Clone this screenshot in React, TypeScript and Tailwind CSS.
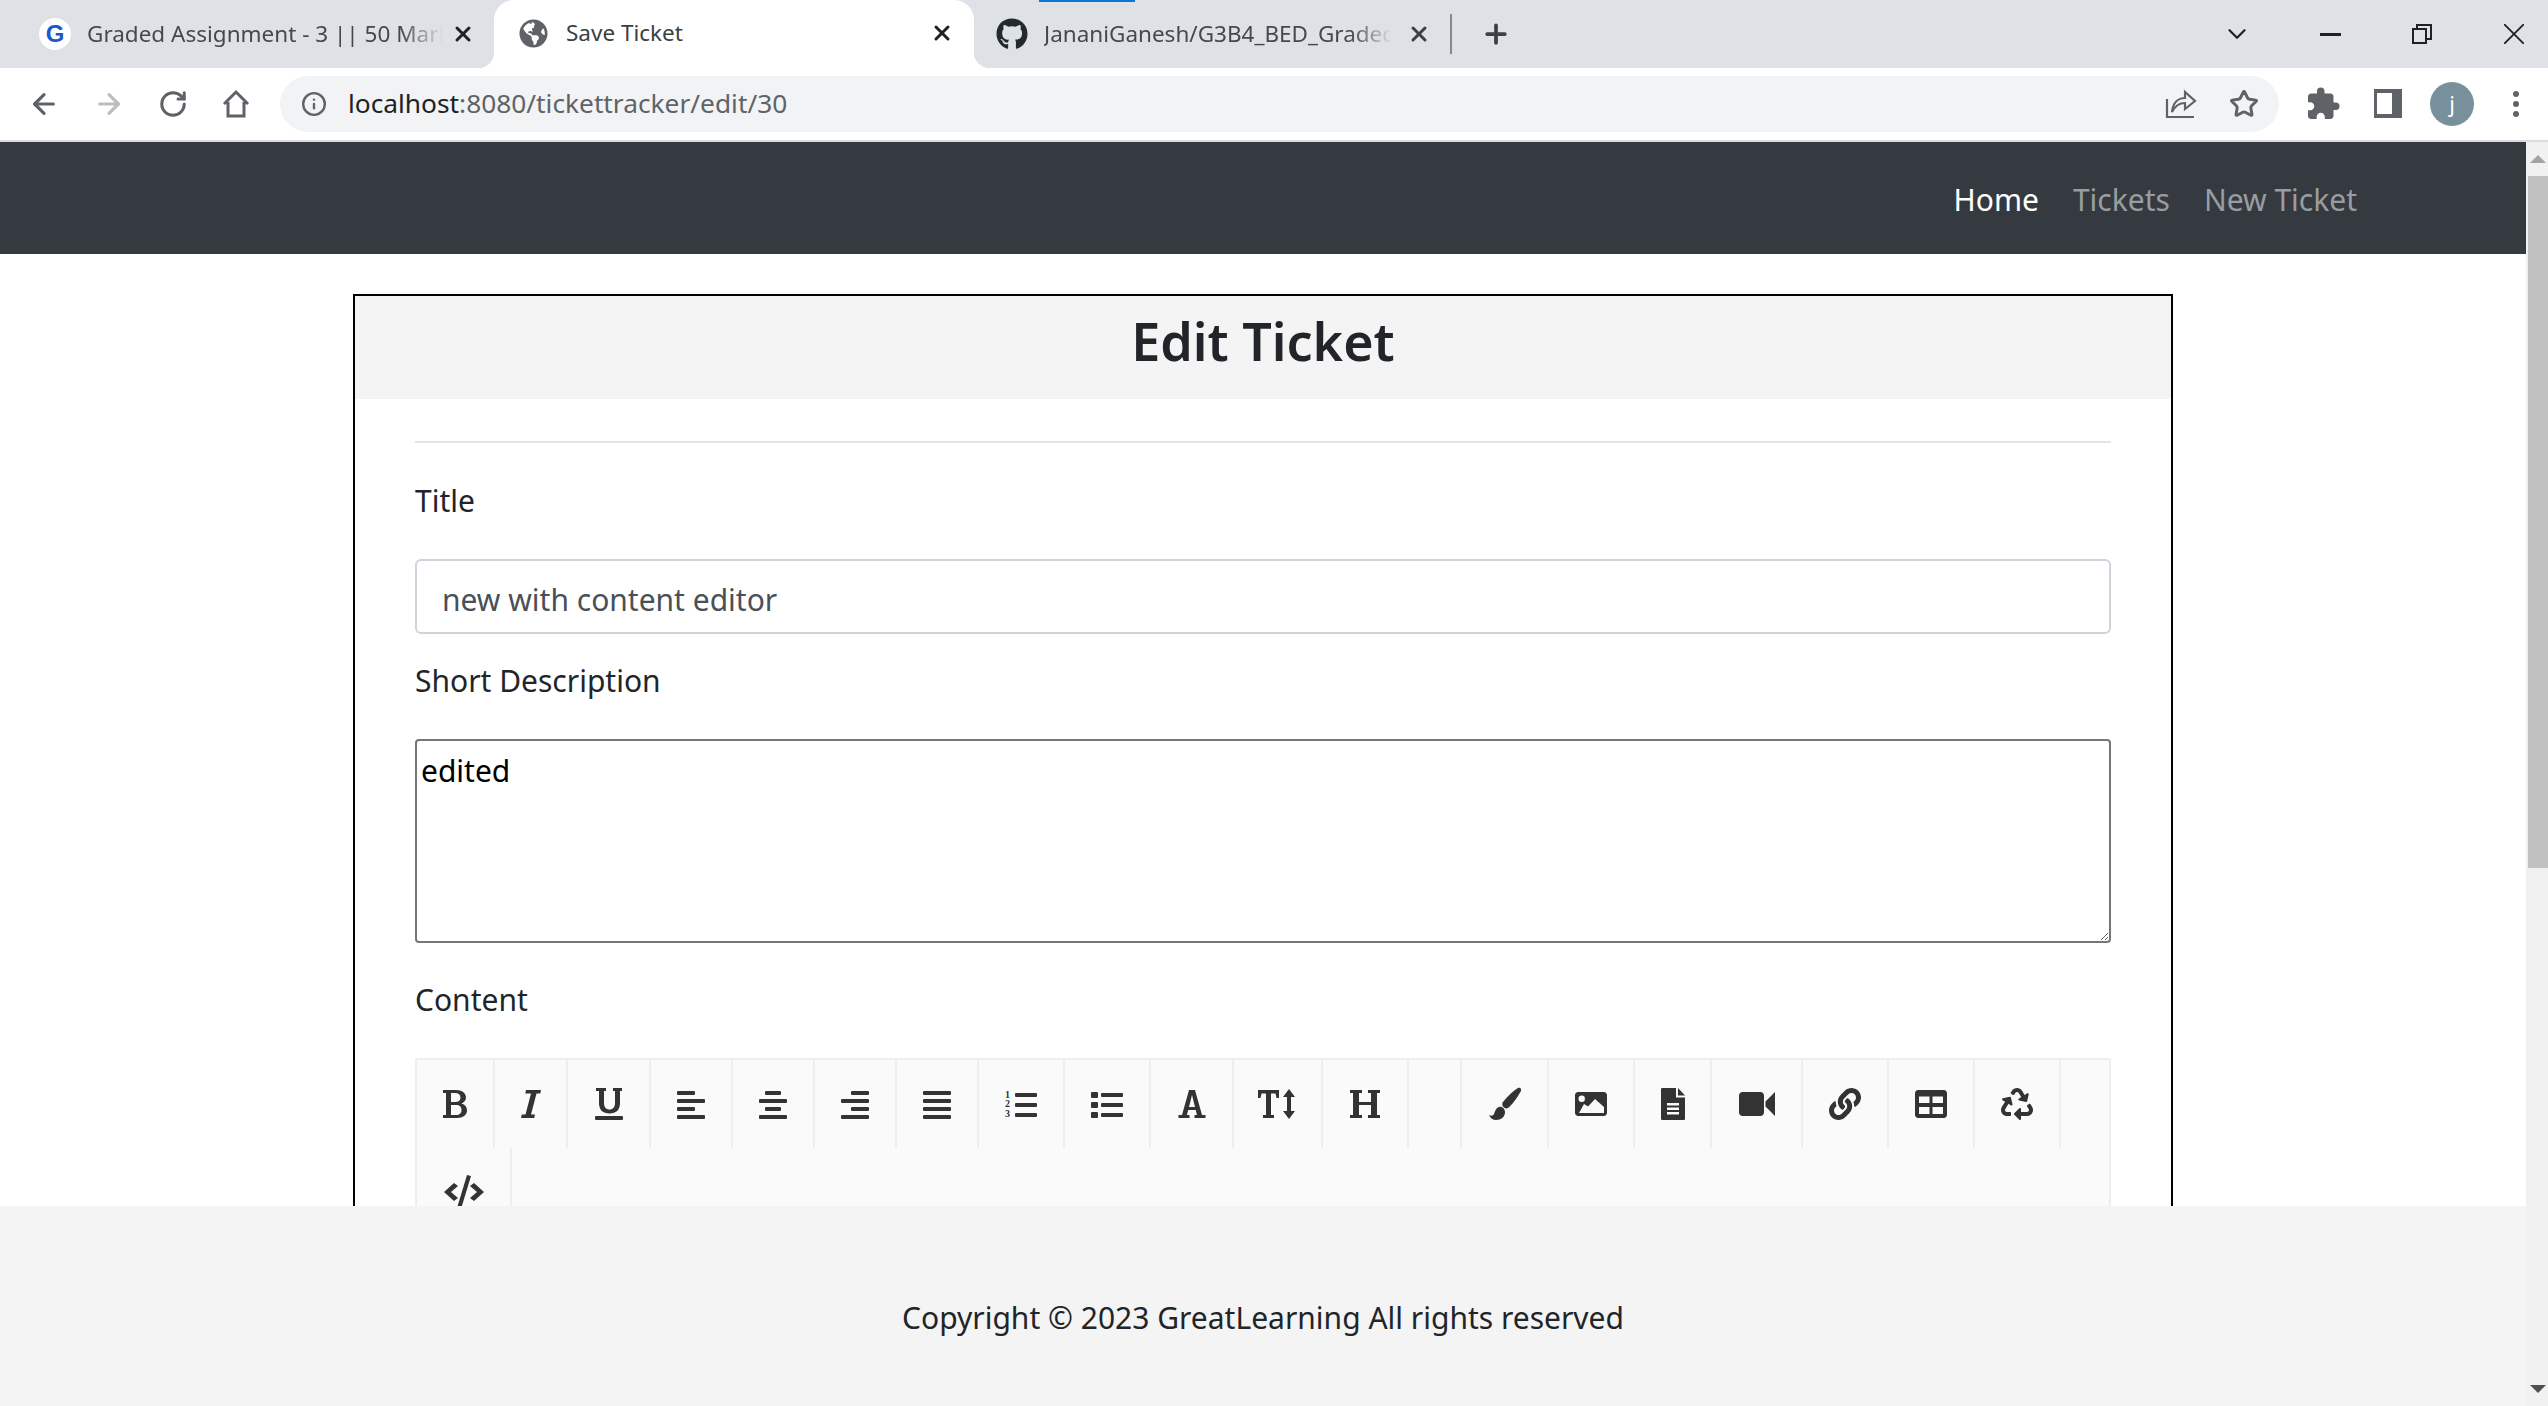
import type { ReactNode } from "react";
import { ArrowLeft, ArrowRight, ChevronDown, Info, Plus, RotateCw, Star, X } from "lucide-react";
import { FaGithub, FaGlobeAmericas, FaLink, FaRecycle } from "react-icons/fa";
import { MdExtension } from "react-icons/md";

const Bars = ({ rows }: { rows: [number, number][] }) => (
  <svg width="32" height="32" viewBox="0 0 32 32" fill="currentColor">
    {rows.map(([x, w], i) => (
      <rect key={i} x={x} y={3 + i * 8} width={w} height="4" rx="1" />
    ))}
  </svg>
);

const Icon = ({ children, w = 32 }: { children: ReactNode; w?: number }) => (
  <svg width={w} height="34" viewBox={`0 0 ${w} 34`} fill="currentColor" fillRule="evenodd">
    {children}
  </svg>
);

const tools: { w: number; icon?: ReactNode; last?: boolean }[] = [
  {
    w: 78,
    icon: (
      <Icon>
        <path d="M4 3H17C23 3 27 6 27 10.500C27 13.500 25 15.500 22.500 16.500C26 17.500 28 20 28 23.500C28 28 24 31 18 31H4V28H7V6H4ZM12 6V15H16C19.500 15 21.500 13.500 21.500 10.500C21.500 7.500 19.500 6 16 6ZM12 18V28H17C20.500 28 22.500 26.500 22.500 23C22.500 19.500 20.500 18 17 18Z" />
      </Icon>
    ),
  },
  {
    w: 73,
    icon: (
      <Icon>
        <path d="M11 3H26L25.300 6.500H21.500L16 27.500H20L19.200 31H6L6.800 27.500H10.500L16 6.500H10.300Z" />
      </Icon>
    ),
  },
  {
    w: 83,
    icon: (
      <Icon>
        <path d="M3 1H13V4H11V16C11 20 13 22.500 16.500 22.500C20 22.500 22 20 22 16V4H20V1H29V4H27V16C27 23 23 26.500 16.500 26.500C10 26.500 6 23 6 16V4H3Z" />
        <rect x="2" y="29" width="28" height="4" rx="1" />
      </Icon>
    ),
  },
  { w: 82, icon: <Bars rows={[[2, 18], [2, 28], [2, 18], [2, 28]]} /> },
  { w: 82, icon: <Bars rows={[[8, 16], [2, 28], [8, 16], [2, 28]]} /> },
  { w: 82, icon: <Bars rows={[[12, 18], [2, 28], [12, 18], [2, 28]]} /> },
  { w: 82, icon: <Bars rows={[[2, 28], [2, 28], [2, 28], [2, 28]]} /> },
  {
    w: 86,
    icon: (
      <Icon>
        <text x="0" y="11" fontSize="10" fontWeight="700" fontFamily="Liberation Serif, serif">1</text>
        <text x="0" y="20" fontSize="10" fontWeight="700" fontFamily="Liberation Serif, serif">2</text>
        <text x="0" y="30" fontSize="10" fontWeight="700" fontFamily="Liberation Serif, serif">3</text>
        <rect x="10" y="6" width="22" height="4" rx="1" />
        <rect x="10" y="16" width="22" height="4" rx="1" />
        <rect x="10" y="26" width="22" height="4" rx="1" />
      </Icon>
    ),
  },
  {
    w: 86,
    icon: (
      <Icon>
        <rect x="0" y="5" width="7" height="6" rx="1" />
        <rect x="0" y="15" width="7" height="6" rx="1" />
        <rect x="0" y="25" width="7" height="6" rx="1" />
        <rect x="10" y="6" width="22" height="4" rx="1" />
        <rect x="10" y="16" width="22" height="4" rx="1" />
        <rect x="10" y="26" width="22" height="4" rx="1" />
      </Icon>
    ),
  },
  {
    w: 83,
    icon: (
      <Icon w={30}>
        <path d="M12 3H18L25 28H28.500V31H17.500V28H20L18.700 23H11.200L9.900 28H12.500V31H1.500V28H5ZM15 8L12 20H18Z" />
      </Icon>
    ),
  },
  {
    w: 89,
    icon: (
      <Icon w={40}>
        <path d="M0 3H21V11H18.500L17.500 6.500H13V28H16V31H5V28H8V6.500H3.500L2.500 11H0Z" />
        <path d="M31 2L37 10H33V24H37L31 32L25 24H29V10H25Z" />
      </Icon>
    ),
  },
  {
    w: 86,
    icon: (
      <Icon w={30}>
        <path d="M0 3H12V6H9V15H21V6H18V3H30V6H27V28H30V31H18V28H21V18H9V28H12V31H0V28H3V6H0Z" />
      </Icon>
    ),
  },
  { w: 53 },
  {
    w: 87,
    icon: (
      <Icon>
        <path d="M29 1C31 0 33 2 32 4C28 11 23 18 19 21C17 22 15 21 14 19.500C13 17.500 13 16 14 15C19 9 25 3 29 1Z" />
        <path d="M10 20C13 19 16 22 16 25C16 30 12 33 7 33C4 33 1 31 0 28C2 29 4 29 5 27C6 24 7 21 10 20Z" />
      </Icon>
    ),
  },
  {
    w: 86,
    icon: (
      <Icon>
        <path d="M3 5H29C30.500 5 32 6.500 32 8V26C32 27.500 30.500 29 29 29H3C1.500 29 0 27.500 0 26V8C0 6.500 1.500 5 3 5ZM4 26H29V20L20 12L13 19.500L9 17Z" />
        <circle cx="6.700" cy="11.700" r="3.200" fill="#fafafa" />
      </Icon>
    ),
  },
  {
    w: 77,
    icon: (
      <Icon w={24}>
        <path d="M1.500 1H15V10.500H24V31.500C24 32.500 23.500 33 22.500 33H1.500C0.500 33 0 32.500 0 31.500V2.500C0 1.500 0.500 1 1.500 1ZM6 16V18.500H18V16ZM6 20.500V23H18V20.500ZM6 25V27.500H18V25Z" />
        <path d="M17 1L24 8.500H17Z" />
      </Icon>
    ),
  },
  {
    w: 91,
    icon: (
      <Icon w={36}>
        <rect x="0" y="5" width="25" height="24" rx="4" />
        <path d="M26.500 14.500L36 5V29L26.500 19.500Z" />
      </Icon>
    ),
  },
  { w: 86, icon: <FaLink size={32} /> },
  {
    w: 86,
    icon: (
      <Icon>
        <path d="M3 3H29C30.500 3 32 4.500 32 6V28C32 29.500 30.500 31 29 31H3C1.500 31 0 29.500 0 28V6C0 4.500 1.500 3 3 3ZM4 9.500V16H14.500V9.500ZM17.500 9.500V16H28V9.500ZM4 20V27H14.500V20ZM17.500 20V27H28V20Z" />
      </Icon>
    ),
  },
  { w: 86, icon: <FaRecycle size={32} /> },
];

const Tool = ({ w, icon }: { w: number; icon?: ReactNode }) => (
  <div
    className="flex h-[88px] shrink-0 items-center justify-center border-r-2 border-[#eeeeee]"
    style={{ width: w }}
  >
    {icon}
  </div>
);

const Tab = ({ icon, title, width }: { icon: ReactNode; title: string; width: string }) => (
  <div className="flex h-[66px] items-center text-[#45494e]">
    {icon}
    <span
      className={`ml-[16px] overflow-hidden whitespace-nowrap text-[22.500px] [mask-image:linear-gradient(to_right,black_88%,transparent)] ${width}`}
    >
      {title}
    </span>
  </div>
);

const App = () => {
  return (
    <div className="flex h-screen flex-col overflow-hidden bg-white font-['Noto_Sans',sans-serif] text-[#212529]">
      {/* tab strip */}
      <div className="relative flex h-[68px] shrink-0 items-center bg-[#dee1e6]">
        <div className="absolute left-[1039px] top-0 h-[2px] w-[96px] bg-[#0b76d3]" />
        <div className="flex w-[494px] items-center pl-[39px]">
          <Tab
            width="w-[356px]"
            title="Graded Assignment - 3 || 50 Marks"
            icon={
              <span className="flex size-[32px] items-center justify-center rounded-full bg-white font-['Liberation_Sans',sans-serif] text-[24px] font-bold text-[#2057c8]">
                G
              </span>
            }
          />
          <X className="ml-[8px] size-[24px] text-[#202124]" strokeWidth={3} />
        </div>
        <div className="relative flex h-[68px] w-[480px] items-center rounded-t-[20px] bg-white pb-[2px] pl-[25px] text-[#3c4043]">
          <span className="absolute bottom-0 left-[-16px] size-[16px] bg-[radial-gradient(circle_at_0_0,transparent_16px,white_16.500px)]" />
          <span className="absolute bottom-0 right-[-16px] size-[16px] bg-[radial-gradient(circle_at_100%_0,transparent_16px,white_16.500px)]" />
          <FaGlobeAmericas className="size-[29px] text-[#5f6368]" />
          <span className="ml-[18px] text-[22.500px]">Save Ticket</span>
          <X className="ml-auto mr-[20px] size-[24px] text-[#202124]" strokeWidth={3} />
        </div>
        <div className="flex items-center pl-[22px]">
          <Tab
            width="w-[348px]"
            title="JananiGanesh/G3B4_BED_Graded_Assignment"
            icon={<FaGithub className="size-[32px] text-[#24292f]" />}
          />
          <X className="ml-[15px] size-[24px] text-[#3c4043]" strokeWidth={3} />
          <div className="ml-[19px] h-[40px] w-[2px] bg-[#85888c]" />
          <Plus className="ml-[29px] size-[30px] text-[#3c4043]" strokeWidth={3} />
        </div>
        <div className="ml-auto flex items-center">
          <ChevronDown className="mr-[68px] size-[30px] text-[#202124]" strokeWidth={1.800} />
          <div className="mr-[71px] h-[3px] w-[21px] bg-[#202124]" />
          <svg className="mr-[72px]" width="20" height="20" viewBox="0 0 20 20" fill="none" stroke="#202124" strokeWidth="2">
            <rect x="1" y="5" width="13" height="14" />
            <path d="M5 5V1H19V15H14" />
          </svg>
          <svg className="mr-[24px]" width="20" height="20" viewBox="0 0 20 20" fill="none" stroke="#202124" strokeWidth="1.800">
            <path d="M0 0L20 20M20 0L0 20" />
          </svg>
        </div>
      </div>

      {/* address bar */}
      <div className="flex h-[74px] shrink-0 items-center border-b-2 border-[#dadce0] bg-white pb-[1px] text-[#5f6368]">
        <ArrowLeft className="ml-[28px] size-[32px]" strokeWidth={2.400} />
        <ArrowRight className="ml-[33px] size-[32px] text-[#bcbdbe]" strokeWidth={2.400} />
        <RotateCw className="ml-[33px] size-[30px]" strokeWidth={2.400} />
        <svg className="ml-[33px]" width="30" height="30" viewBox="0 0 30 30" fill="none" stroke="currentColor" strokeWidth="3">
          <path d="M3 15L15 3L27 15M7 13V27H23V13" />
        </svg>
        <div className="ml-[29px] flex h-[56px] w-[1999px] items-center rounded-full bg-[#f1f3f4]">
          <Info className="ml-[21px] size-[26px]" strokeWidth={2.200} />
          <span className="ml-[21px] text-[26.300px] text-[#202124]">
            localhost<span className="text-[#5f6368]">:8080/tickettracker/edit/30</span>
          </span>
          <svg className="ml-auto" width="32" height="30" viewBox="0 0 32 30" fill="none" stroke="currentColor" strokeWidth="2.200">
            <path d="M2 10V28H29M7 23C8 14 13 9 20 9V3L30 12L20 20V14C14 14 10 17 7 23Z" />
          </svg>
          <Star className="ml-[32px] mr-[20px] size-[30px]" strokeWidth={2.400} />
        </div>
        <MdExtension className="ml-[26px] size-[36px]" />
        <div className="ml-[33px] h-[29px] w-[28px] border-y-[4px] border-r-[10px] border-l-[3px] border-[#5f6368]" />
        <div className="ml-[28px] flex size-[44px] items-center justify-center rounded-full bg-[#78909c] text-[22px] text-white">
          j
        </div>
        <div className="ml-[39px] flex flex-col gap-[4px]">
          <span className="size-[6px] rounded-full bg-[#5f6368]" />
          <span className="size-[6px] rounded-full bg-[#5f6368]" />
          <span className="size-[6px] rounded-full bg-[#5f6368]" />
        </div>
      </div>

      <div className="flex min-h-0 flex-1">
        <div className="flex min-w-0 flex-1 flex-col">
          <nav className="flex h-[112px] shrink-0 items-center justify-end gap-[34px] bg-[#343a40] pt-[2px] pr-[169px] text-[30px] text-[#9a9da0]">
            <a className="text-white">Home</a>
            <a>Tickets</a>
            <a>New Ticket</a>
          </nav>

          <main className="min-h-0 flex-1 overflow-hidden">
            <div className="mx-auto mt-[40px] w-[1820px] border-2 border-black text-[30px]">
              <h2 className="flex h-[103px] items-center justify-center bg-[#f4f4f4] pb-[13px] text-[52px] font-semibold">
                Edit Ticket
              </h2>
              <div className="px-[60px] pt-[42px]">
                <hr className="border-t-2 border-[#e5e5e5]" />
                <label className="mt-[38px] mb-[39px] block h-[39px] leading-[39px]">Title</label>
                <input
                  readOnly
                  value="new with content editor"
                  className="block h-[75px] w-full rounded-[6px] border-2 border-[#ced4da] px-[25px] pt-[6px] text-[#495057]"
                />
                <label className="mt-[27px] mb-[39px] block h-[39px] leading-[39px]">Short Description</label>
                <textarea
                  readOnly
                  value="edited"
                  className="block h-[204px] w-full rounded-[4px] border-2 border-[#767676] px-[4px] pt-[7px] text-black"
                />
                <label className="mt-[37px] mb-[39px] block h-[39px] leading-[39px]">Content</label>
                <div className="flex flex-wrap border-x-2 border-t-2 border-[#eeeeee] bg-[#fafafa] text-[#333333]">
                  {tools.map((t, i) => (
                    <Tool key={i} w={t.w} icon={t.icon} />
                  ))}
                  <Tool
                    w={95}
                    icon={
                      <Icon w={40}>
                        <path d="M10 8L14 11L7 17L14 23L10 26L0 17Z" />
                        <path d="M30 8L26 11L33 17L26 23L30 26L40 17Z" />
                        <path d="M23 0L27 1L17 34L13 33Z" />
                      </Icon>
                    }
                  />
                </div>
              </div>
            </div>
          </main>

          <footer className="flex h-[200px] shrink-0 items-center justify-center bg-[#f4f4f4] pt-[22px] text-[30px]">
            Copyright © 2023 GreatLearning All rights reserved
          </footer>
        </div>

        {/* scrollbar */}
        <div className="flex w-[22px] shrink-0 flex-col bg-[#f1f1f1] pl-[2px]">
          <div className="flex h-[34px] items-center justify-center">
            <span className="border-x-[8px] border-b-[8px] border-x-transparent border-b-[#a3a3a3]" />
          </div>
          <div className="h-[692px] bg-[#c1c1c1]" />
          <div className="mt-auto flex h-[34px] items-center justify-center">
            <span className="border-x-[8px] border-t-[8px] border-x-transparent border-t-[#505050]" />
          </div>
        </div>
      </div>
    </div>
  );
};

export default App;
